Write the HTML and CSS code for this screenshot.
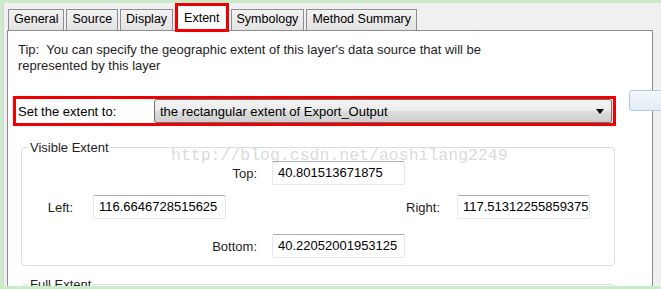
FILE: index.html
```html
<!DOCTYPE html>
<html lang="en">
<head>
  <meta charset="UTF-8" />
  <title>Layer Properties - Extent</title>
  <link rel="stylesheet" href="styles.css">
</head>
<body>

<div class="window">
  <!-- Tabs -->
  <div class="tabs">
    <span class="tab">General</span>
    <span class="tab">Source</span>
    <span class="tab">Display</span>
    <span class="tab active">Extent</span>
    <span class="tab">Symbology</span>
    <span class="tab">Method Summary</span>
  </div>

  <!-- Tab page -->
  <div class="panel">
    <p class="tip">Tip:&nbsp; You can specify the geographic extent of this layer's data source that will be<br>represented by this layer</p>

    <div class="extent-row">
      <span class="extent-label">Set the extent to:</span>
      <div class="dropdown">
        <span>the rectangular extent of Export_Output</span>
        <span class="arrow"></span>
      </div>
    </div>

    <fieldset class="group">
      <legend>Visible Extent</legend>
      <div class="row row-top">
        <span class="lbl lbl-center">Top:</span>
        <span class="field">40.801513671875</span>
      </div>
      <div class="row row-mid">
        <span class="lbl lbl-left">Left:</span>
        <span class="field">116.6646728515625</span>
        <span class="lbl lbl-right">Right:</span>
        <span class="field">117.51312255859375</span>
      </div>
      <div class="row row-bottom">
        <span class="lbl lbl-center">Bottom:</span>
        <span class="field">40.22052001953125</span>
      </div>
    </fieldset>

    <fieldset class="group full">
      <legend>Full Extent</legend>
    </fieldset>
  </div>

  <div class="side-btn"></div>
  <div class="watermark">http://blog.csdn.net/aoshilang2249</div>
</div>

</body>
</html>
```

FILE: styles.css
```css
* {
  box-sizing: border-box;
}

html, body {
  margin: 0;
  padding: 0;
  background-color: #cbeccb;
  font-family: "Liberation Sans", Arial, sans-serif;
  font-size: 13px;
  color: #000;
}

.window {
  position: relative;
  margin: 3px 0 0 3px;
  height: 283px;
  overflow: hidden;
  background-color: #f0f0f0;
  border-left: 1px solid #d6d6d6;
}

/* Tabs */
.tabs {
  display: flex;
  align-items: flex-end;
  height: 27px;
  padding-left: 4px;
  font-size: 12.5px;
}

.tab {
  height: 21px;
  margin-right: 2px;
  padding: 2px 5px 0;
  background: linear-gradient(#f2f2f2, #e3e3e3);
  border: 1px solid #8c8e94;
  border-bottom: none;
  white-space: nowrap;
}

.tab.active {
  height: 29px;
  margin: 0 2px -2px 0;
  padding: 5px 6px 0;
  background: #fff;
  border: 3px solid #f00000;
  position: relative;
  z-index: 2;
}

/* Page */
.panel {
  margin-left: 3px;
  width: 646px;
  height: 260px;
  background-color: #fff;
  border: 1px solid #8e8f8f;
  padding: 0 5px;
}

.tip {
  margin: 0;
  padding: 11px 0 0 5px;
  line-height: 16px;
  color: #1e1e1e;
}

.extent-row {
  display: flex;
  align-items: center;
  margin-top: 22px;
  width: 603px;
  height: 30px;
  border: 3px solid #f00000;
  padding-left: 2px;
}

.extent-label {
  width: 136px;
}

.dropdown {
  display: flex;
  align-items: center;
  justify-content: space-between;
  width: 458px;
  height: 24px;
  padding: 0 7px 0 5px;
  border: 1px solid #707070;
  border-radius: 3px;
  background: linear-gradient(#f3f3f3 0%, #ebebeb 50%, #dcdcdc 51%, #cfcfcf 100%);
}

.arrow {
  width: 0;
  height: 0;
  border-left: 4px solid transparent;
  border-right: 4px solid transparent;
  border-top: 5px solid #000;
}

/* Group boxes */
.group {
  margin: 14px 0 0 8px;
  width: 594px;
  padding: 6px 0 7px;
  border: 1px solid #d5dfe5;
  border-radius: 4px;
}

.group legend {
  padding: 0 2px;
  margin-left: 6px;
  color: #1e1e1e;
}

.row {
  display: flex;
  align-items: center;
}

.row-mid {
  margin-top: 10px;
}

.row-bottom {
  margin-top: 15px;
}

.lbl {
  text-align: right;
  color: #1e1e1e;
}

.lbl-center {
  width: 250px;
  padding-right: 15px;
}

.lbl-left {
  width: 71px;
  padding-right: 20px;
}

.lbl-right {
  width: 231px;
  padding-right: 17px;
}

.field {
  width: 133px;
  height: 24px;
  line-height: 22px;
  padding-left: 5px;
  border: 1px solid #e3e9ef;
  border-top-color: #abadb3;
  border-radius: 2px;
  overflow: hidden;
  white-space: nowrap;
}

.group.full {
  margin-top: 11px;
  height: 30px;
}

/* Overlays */
.side-btn {
  position: absolute;
  top: 87px;
  left: 625px;
  width: 40px;
  height: 21px;
  border: 1px solid #b4c9e2;
  border-radius: 3px;
  background: linear-gradient(#f4f7fb, #e3ebf5);
}

.watermark {
  position: absolute;
  top: 143px;
  left: 167px;
  font-family: "Liberation Mono", monospace;
  font-size: 16.5px;
  color: rgba(160, 160, 160, 0.4);
  pointer-events: none;
}
```
